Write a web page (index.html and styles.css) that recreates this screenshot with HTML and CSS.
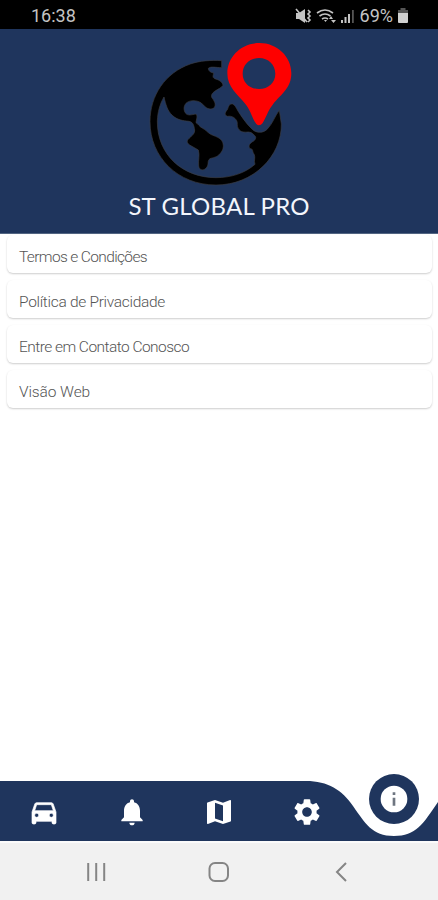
FILE: index.html
```html
<!DOCTYPE html>
<html lang="pt-BR">
<head>
<meta charset="utf-8">
<title>ST GLOBAL PRO</title>
<link rel="stylesheet" href="styles.css">
</head>
<body>
<div class="screen">
  <div class="status">
    <span class="time">16:38</span>
    <div class="indicators">
      <svg class="signals" viewBox="0 0 62 20">
        <path d="M1 7h3l6-4v14l-6-4H1z"/>
        <path class="line" d="M1 3l11 13M13 4l2 2-2 2 2 2-2 2 2 2-2 2"/>
        <path class="line" d="M22 7q8-6 16 0M24.500 10q5.500-4 11 0M27 13q3-2 6 0"/>
        <path d="M29 14h3l-1.500 2zM34 13l2-3 2 3zM36 14h5l-2.500 3z"/>
        <path d="M46 14h2v3h-2zM49.500 11h2v6h-2zM53 8h2v9h-2z"/>
        <path class="dim" d="M57 4h1.800v13H57z"/>
      </svg>
      <span class="percent">69%</span>
      <svg class="battery" viewBox="0 0 12 18">
        <path class="dim" d="M3.500 1h5v2H11v4H1V3h2.500z"/>
        <path d="M1 6h10v9q0 1-1 1H2q-1 0-1-1z"/>
      </svg>
    </div>
  </div>
  <header class="hero">
    <svg class="logo" viewBox="0 0 480 480">
      <g class="globe">
        <path d="M245 77C214 75 179 77 151 87C76 113 30 181 30 260C30 365 112 450 228 450C340 450 425 364 424 267L418 226C405 242 398 266 383 281C370 296 349 294 338 284C322 270 306 247 294 228C289 219 285 210 278 207C266 205 266 216 262 224C255 232 252 240 262 244C275 242 284 247 290 257C294 263 289 272 295 281C302 292 312 292 326 291C337 292 341 299 346 304C349 309 346 314 341 318C330 324 323 332 330 341C341 341 336 350 342 357C348 369 340 375 345 388C314 415 273 428 228 428C127 428 51 358 52 258C53 232 59 208 72 186C77 208 83 229 97 241C111 255 129 257 147 259C160 261 162 273 164 285C165 296 157 300 151 307C139 316 139 323 149 330L175 345C180 362 174 375 176 393C178 408 193 408 201 396C207 386 201 377 210 371C220 367 230 368 240 356C250 346 252 334 248 322C242 307 224 304 212 298C202 292 197 284 188 280C178 275 174 266 168 263C169 252 174 244 168 237C156 239 143 243 137 235C130 225 131 213 138 205C148 195 169 194 184 204L194 214C202 222 212 224 220 220C230 213 225 200 217 190C211 182 216 175 224 169C235 161 244 159 249 151C248 140 235 134 224 131C216 127 220 121 221 114C212 113 205 108 205 100C213 93 227 98 245 98Z"/>
      </g>
      <path class="pin" fill-rule="evenodd" d="M358 24C304 24 262 65 262 115C262 157 292 178 318 209C335 230 342 270 357 271C374 269 377 235 398 209C425 176 454 159 454 115C454 65 412 24 358 24ZM357 69C385 69 406 89 406 116C406 143 385 162 357 162C329 162 308 143 308 116C308 89 329 69 357 69Z"/>
    </svg>
    <h1>ST GLOBAL PRO</h1>
  </header>
  <main class="list">
    <div class="card"><span class="terms">Termos e Condições</span></div>
    <div class="card"><span class="privacy">Política de Privacidade</span></div>
    <div class="card"><span class="contact">Entre em Contato Conosco</span></div>
    <div class="card"><span class="web">Visão Web</span></div>
  </main>
  <nav class="tabs">
    <svg class="wave" viewBox="0 0 438 60"><path d="M0 0H306C328 0 342 9 353 25C365 42 372 55 394 55C416 55 423 43 438 21V60H0Z"/></svg>
    <div class="tab"><svg class="icon car" viewBox="0 0 24 24"><path d="M18.920 6.010C18.720 5.420 18.160 5 17.500 5h-11c-.66 0-1.210.42-1.420 1.010L3 12v8c0 .55.45 1 1 1h1c.55 0 1-.45 1-1v-1h12v1c0 .55.45 1 1 1h1c.55 0 1-.45 1-1v-8l-2.080-5.990zM6.500 16c-.83 0-1.500-.67-1.500-1.500S5.670 13 6.500 13s1.500.67 1.500 1.500S7.330 16 6.500 16zm11 0c-.83 0-1.500-.67-1.500-1.500s.67-1.500 1.500-1.500 1.500.67 1.500 1.500-.67 1.500-1.500 1.500zM5 11l1.500-4.500h11L19 11H5z"/></svg></div>
    <div class="tab"><svg class="icon" viewBox="0 0 24 24"><path d="M12 22c1.100 0 2-.9 2-2h-4c0 1.100.89 2 2 2zm6-6v-5c0-3.070-1.640-5.640-4.500-6.320V4c0-.83-.67-1.500-1.500-1.500s-1.500.67-1.500 1.500v.68C7.630 5.360 6 7.920 6 11v5l-2 2v1h16v-1l-2-2z"/></svg></div>
    <div class="tab"><svg class="icon" viewBox="0 0 24 24"><path d="M20.500 3l-.16.03L15 5.100 9 3 3.360 4.900c-.21.07-.36.25-.36.480V20.500c0 .28.22.5.5.5l.16-.03L9 18.900l6 2.100 5.640-1.900c.21-.07.36-.25.36-.480V3.500c0-.28-.22-.5-.5-.5zM15 19l-6-2.110V5l6 2.110V19z"/></svg></div>
    <div class="tab"><svg class="icon" viewBox="0 0 24 24"><path d="M19.140 12.940c.04-.3.06-.61.06-.94 0-.32-.02-.64-.07-.94l2.030-1.580c.18-.14.23-.41.12-.61l-1.920-3.320c-.12-.22-.37-.29-.59-.22l-2.390.96c-.5-.38-1.030-.7-1.620-.94l-.36-2.540c-.04-.24-.24-.41-.48-.41h-3.840c-.24 0-.43.17-.47.41l-.36 2.540c-.59.24-1.130.57-1.620.94l-2.390-.96c-.22-.08-.47 0-.59.22L2.740 8.870c-.12.21-.08.47.12.61l2.030 1.580c-.05.3-.09.63-.09.94s.02.64.07.94l-2.030 1.580c-.18.14-.23.41-.12.61l1.920 3.320c.12.22.37.29.59.22l2.390-.96c.5.38 1.030.7 1.620.94l.36 2.540c.05.24.24.41.48.41h3.840c.24 0 .44-.17.47-.41l.36-2.540c.59-.24 1.130-.56 1.620-.94l2.390.96c.22.08.47 0 .59-.22l1.920-3.320c.12-.22.07-.47-.12-.61l-2.010-1.580zM12 15.600c-1.980 0-3.600-1.620-3.600-3.600s1.620-3.600 3.600-3.600 3.600 1.620 3.600 3.600-1.620 3.600-3.600 3.600z"/></svg></div>
    <div class="tab active"><div class="bubble"><svg class="icon" viewBox="0 0 24 24"><circle cx="12" cy="12" r="10"/><path class="info-mark" d="M11 7h2v2h-2zM11 11h2v6h-2z"/></svg></div></div>
  </nav>
  <div class="system">
    <svg class="sys-icon" viewBox="0 0 24 24"><path d="M4.200 3v18M12.200 3v18M20.200 3v18"/></svg>
    <svg class="sys-icon" viewBox="0 0 24 24"><rect x="2.500" y="3" width="18.500" height="18" rx="5.500"/></svg>
    <svg class="sys-icon" viewBox="0 0 24 24"><path d="M16 3l-9 9 9 9"/></svg>
  </div>
</div>
</body>
</html>
```
FILE: styles.css
```css
* { box-sizing: border-box; }
body { margin: 0; background: #fff; font-family: Roboto, sans-serif; }
.screen { width: 438px; height: 900px; display: flex; flex-direction: column; overflow: hidden; }
svg { display: block; }

.status {
  height: 29px; background: #000; color: #c4c4c4;
  display: flex; justify-content: space-between; align-items: center;
  padding: 2px 28px 0 31px; font-size: 18px;
}
.indicators { display: flex; align-items: center; }
.signals { width: 62px; height: 20px; fill: #c4c4c4; margin-right: 3px; }
.signals .line { fill: none; stroke: #c4c4c4; stroke-width: 1.6; }
.signals .dim, .battery .dim { fill: #555; }
.battery { width: 12px; height: 18px; fill: #d0d0d0; margin: 0 1px 0 4px; }

.hero {
  height: 205px; background: #1f355d; border-bottom: 1px solid #526582;
  display: flex; flex-direction: column; align-items: center; padding-top: 6px;
}
.logo { width: 160px; height: 160px; margin-right: -2px; }
.globe { stroke: #3b3d42; stroke-width: 2; }
.pin { fill: #fe0000; }
.hero h1 {
  margin: -5px 0 0; font: 400 24px/32px Lato, sans-serif; letter-spacing: .2px; color: #f3f6fc;
  white-space: nowrap;
}

.list { flex: 1; padding: 1px 6px 0 7px; display: flex; flex-direction: column; gap: 7px; }
.card {
  height: 38px; border-radius: 6px; padding: 5px 12px 0; background: #fff;
  box-shadow: 0 1px 2px rgba(0, 0, 0, .2);
  display: flex; align-items: center;
  font-size: 15.5px; font-weight: 300; color: #555; white-space: nowrap;
}
.terms { letter-spacing: -.64px; }
.privacy { letter-spacing: -.3px; }
.contact { letter-spacing: -.54px; }
.web { letter-spacing: -.1px; }

.tabs { height: 60px; position: relative; display: grid; grid-template-columns: repeat(5, 1fr); }
.wave { position: absolute; inset: 0; width: 438px; height: 60px; fill: #1f355d; }
.tab { position: relative; display: flex; justify-content: center; align-items: center; padding: 1px 0 0 1px; }
.icon { width: 32px; height: 32px; fill: #fff; }
.car { stroke: #fff; stroke-width: .5; }
.active { align-items: flex-start; padding: 0; }
.bubble {
  width: 50px; height: 50px; margin-top: -7px; border-radius: 50%;
  background: #1f355d; display: flex; align-items: center; justify-content: center;
}
.icon .info-mark { fill: #6e7580; }

.system {
  height: 59px; background: #f1f1f1; border-top: 2px solid #fbfbfb;
  display: flex; justify-content: space-between; align-items: center; padding: 0 84px;
}
.sys-icon { width: 24px; height: 24px; fill: none; stroke: #858585; stroke-width: 2; }
```
